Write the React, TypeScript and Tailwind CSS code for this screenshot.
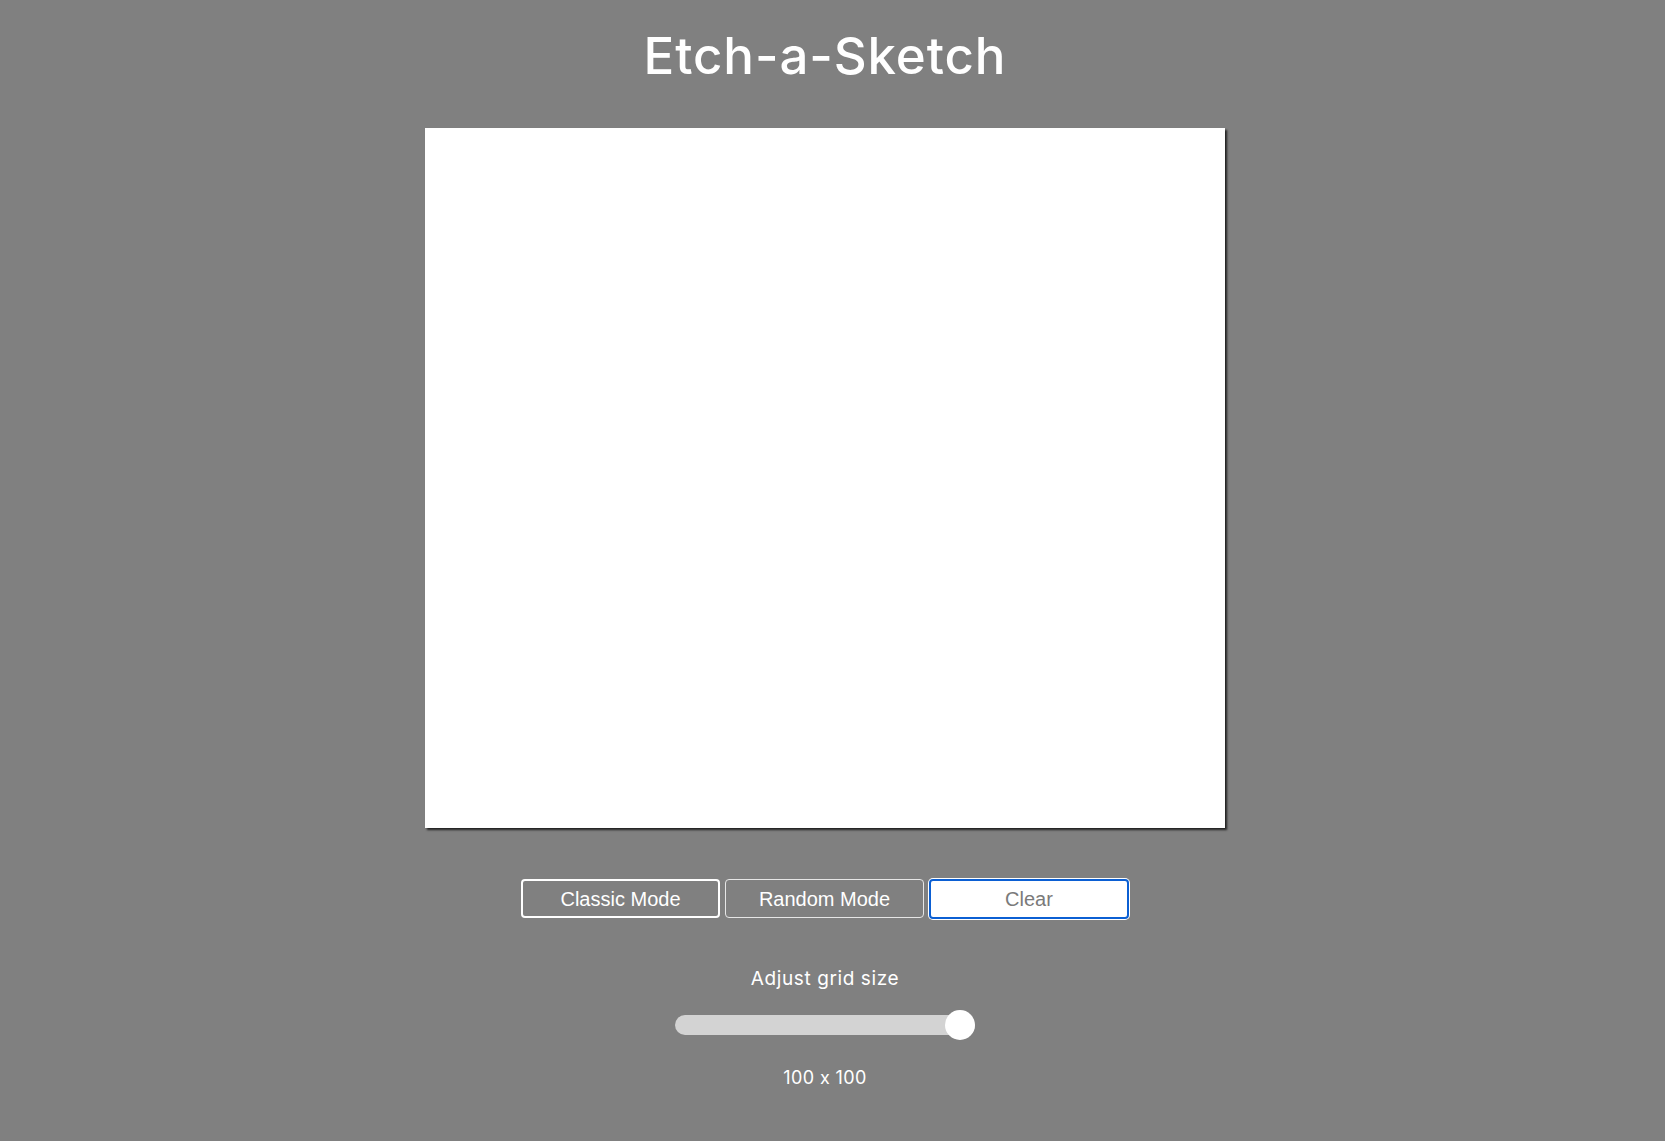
import React, { useState } from 'react';

const App = () => {
    const [size, setSize] = useState(100);
    const [mode, setMode] = useState<'classic' | 'random'>('classic');

    return (
        <div className="min-h-screen w-full bg-[#808080] pr-[15px] font-['Inter',sans-serif] text-white [font-feature-settings:'calt'_0]">
            <div className="flex flex-col items-center">
                {/* Title */}
                <h1 className="mt-[26px] text-[51px] font-medium leading-[60px] tracking-[0.9px]">Etch-a-Sketch</h1>

                {/* Drawing board */}
                <div className="mt-[42px] h-[700px] w-[800px] bg-white shadow-[2px_2px_2px_rgba(0,0,0,0.75)]" />

                {/* Mode buttons */}
                <div className="mt-[51px] flex gap-[5px] font-['Liberation_Sans',Arial,sans-serif]">
                    <button
                        onClick={() => setMode('classic')}
                        className="h-[39px] w-[199px] rounded-[4px] border-2 border-white bg-transparent text-[20px] text-white"
                    >
                        Classic Mode
                    </button>
                    <button
                        onClick={() => setMode('random')}
                        className="h-[39px] w-[199px] rounded-[4px] border border-[#e6e6e6] bg-transparent text-[20px] text-white"
                    >
                        Random Mode
                    </button>
                    <button className="h-[40px] w-[200px] rounded-[4px] border-2 border-[#0b5fd3] bg-white text-[20px] text-[#7a7a7a] shadow-[0_0_0_1px_#ffffff]">
                        Clear
                    </button>
                </div>

                {/* Grid size slider */}
                <p className="mt-[48px] text-[19px] leading-[24px] tracking-[0.6px]">Adjust grid size</p>
                <input
                    type="range"
                    min={1}
                    max={100}
                    value={size}
                    onChange={(e) => setSize(Number(e.target.value))}
                    className="mt-[24px] h-[20px] w-[300px] cursor-pointer appearance-none rounded-full bg-[#d3d3d3] outline-none [&::-webkit-slider-thumb]:h-[30px] [&::-webkit-slider-thumb]:w-[30px] [&::-webkit-slider-thumb]:appearance-none [&::-webkit-slider-thumb]:rounded-full [&::-webkit-slider-thumb]:bg-white"
                />
                <p className="mt-[31px] text-[18px] leading-[24px] tracking-[0.4px]">
                    {size} x {size}
                </p>
                <div className="h-[40px]" data-mode={mode} />
            </div>
        </div>
    );
};

export default App;
